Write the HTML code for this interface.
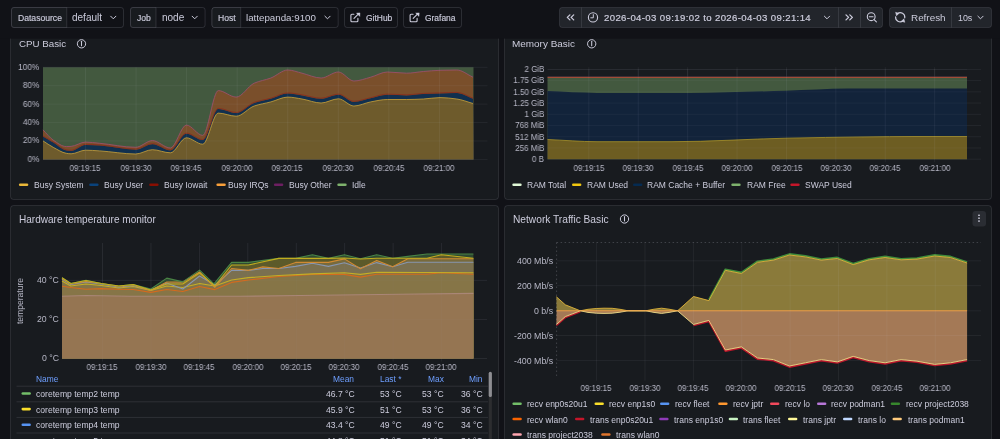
<!DOCTYPE html>
<html><head><meta charset="utf-8"><style>
html,body{margin:0;padding:0;}
body{width:1000px;height:439px;overflow:hidden;background:#111217;position:relative;font-family:"Liberation Sans", sans-serif;}
svg{position:absolute;left:0;top:0;}
.t{position:absolute;white-space:nowrap;will-change:transform;}
</style></head><body>
<svg width="1000" height="439" viewBox="0 0 1000 439">
<rect x="10.5" y="28.5" width="488" height="171" rx="3" fill="#181b1f" stroke="rgba(204,204,220,0.12)" stroke-width="1" />
<rect x="504.5" y="28.5" width="487" height="171" rx="3" fill="#181b1f" stroke="rgba(204,204,220,0.12)" stroke-width="1" />
<rect x="10.5" y="205.5" width="488" height="264" rx="3" fill="#181b1f" stroke="rgba(204,204,220,0.12)" stroke-width="1" />
<rect x="504.5" y="205.5" width="487" height="264" rx="3" fill="#181b1f" stroke="rgba(204,204,220,0.12)" stroke-width="1" />
<rect x="0" y="0" width="1000" height="38.6" rx="0" fill="#111217" stroke="none" stroke-width="1" />
<rect x="11.5" y="7.5" width="112" height="20" rx="2.5" fill="#111217" stroke="rgba(204,204,220,0.15)" stroke-width="1" />
<path d="M14,7.5 H66.75 V27.5 H14 A2.5,2.5 0 0 1 11.5,25 V10 A2.5,2.5 0 0 1 14,7.5 Z" fill="#181b1f" stroke="rgba(204,204,220,0.15)" stroke-width="1"/>
<path d="M110.70,16.20 L113.30,18.80 L115.90,16.20" fill="none" stroke="#ccccdc" stroke-width="1" stroke-linecap="round" stroke-linejoin="round"/>
<rect x="130.5" y="7.5" width="74.6" height="20" rx="2.5" fill="#111217" stroke="rgba(204,204,220,0.15)" stroke-width="1" />
<path d="M133,7.5 H156 V27.5 H133 A2.5,2.5 0 0 1 130.5,25 V10 A2.5,2.5 0 0 1 133,7.5 Z" fill="#181b1f" stroke="rgba(204,204,220,0.15)" stroke-width="1"/>
<path d="M192.10,16.20 L194.70,18.80 L197.30,16.20" fill="none" stroke="#ccccdc" stroke-width="1" stroke-linecap="round" stroke-linejoin="round"/>
<rect x="212.0" y="7.5" width="126.19999999999999" height="20" rx="2.5" fill="#111217" stroke="rgba(204,204,220,0.15)" stroke-width="1" />
<path d="M214.5,7.5 H240.7 V27.5 H214.5 A2.5,2.5 0 0 1 212.0,25 V10 A2.5,2.5 0 0 1 214.5,7.5 Z" fill="#181b1f" stroke="rgba(204,204,220,0.15)" stroke-width="1"/>
<path d="M324.90,16.20 L327.50,18.80 L330.10,16.20" fill="none" stroke="#ccccdc" stroke-width="1" stroke-linecap="round" stroke-linejoin="round"/>
<rect x="344.5" y="7.5" width="53" height="20" rx="2.5" fill="#111217" stroke="rgba(204,204,220,0.15)" stroke-width="1" />
<path d="M353.9,14.3 H351.9 Q350.9,14.3 350.9,15.3 V20.8 Q350.9,21.8 351.9,21.8 H356.9 Q357.9,21.8 357.9,20.8 V18.4" fill="none" stroke="#ccccdc" stroke-width="1.1" stroke-linecap="round"/>
<path d="M354.0,18.3 L358.5,13.8" fill="none" stroke="#ccccdc" stroke-width="1.1" stroke-linecap="round"/>
<path d="M356.5,13.1 L360.0,12.9 L359.79999999999995,16.4 Z" fill="#ccccdc" stroke="#ccccdc" stroke-width="0.4" stroke-linejoin="round"/>
<rect x="403.5" y="7.5" width="58" height="20" rx="2.5" fill="#111217" stroke="rgba(204,204,220,0.15)" stroke-width="1" />
<path d="M413.1,14.3 H411.1 Q410.1,14.3 410.1,15.3 V20.8 Q410.1,21.8 411.1,21.8 H416.1 Q417.1,21.8 417.1,20.8 V18.4" fill="none" stroke="#ccccdc" stroke-width="1.1" stroke-linecap="round"/>
<path d="M413.20000000000005,18.3 L417.70000000000005,13.8" fill="none" stroke="#ccccdc" stroke-width="1.1" stroke-linecap="round"/>
<path d="M415.70000000000005,13.1 L419.20000000000005,12.9 L419.0,16.4 Z" fill="#ccccdc" stroke="#ccccdc" stroke-width="0.4" stroke-linejoin="round"/>
<rect x="559.5" y="7.5" width="323" height="20" rx="2.5" fill="#22252b" stroke="rgba(204,204,220,0.12)" stroke-width="1" />
<line x1="581.5" y1="7.5" x2="581.5" y2="27.5" stroke="rgba(204,204,220,0.12)" stroke-width="1" />
<line x1="838.5" y1="7.5" x2="838.5" y2="27.5" stroke="rgba(204,204,220,0.12)" stroke-width="1" />
<line x1="860.5" y1="7.5" x2="860.5" y2="27.5" stroke="rgba(204,204,220,0.12)" stroke-width="1" />
<path d="M569.9,14.899999999999999 L567.3,17.4 L569.9,19.9 M573.6999999999999,14.899999999999999 L571.0999999999999,17.4 L573.6999999999999,19.9" fill="none" stroke="#ccccdc" stroke-width="1.3" stroke-linecap="round" stroke-linejoin="round"/>
<path d="M846,14.899999999999999 L848.6,17.4 L846,19.9 M849.8,14.899999999999999 L852.4,17.4 L849.8,19.9" fill="none" stroke="#ccccdc" stroke-width="1.3" stroke-linecap="round" stroke-linejoin="round"/>
<circle cx="593" cy="17.4" r="4.6" fill="none" stroke="#ccccdc" stroke-width="1.1"/>
<path d="M593.3,14.6 V17.8 H590.8" fill="none" stroke="#ccccdc" stroke-width="1" stroke-linecap="round"/>
<path d="M824.40,16.20 L827.00,18.80 L829.60,16.20" fill="none" stroke="#ccccdc" stroke-width="1" stroke-linecap="round" stroke-linejoin="round"/>
<circle cx="871.2" cy="16.7" r="3.9" fill="none" stroke="#ccccdc" stroke-width="1.1"/>
<path d="M869.3,16.7 H873.1 M874.1,19.6 L876.4,21.9" fill="none" stroke="#ccccdc" stroke-width="1.1" stroke-linecap="round"/>
<rect x="889.5" y="7.5" width="102" height="20" rx="2.5" fill="#22252b" stroke="rgba(204,204,220,0.12)" stroke-width="1" />
<line x1="951.5" y1="7.5" x2="951.5" y2="27.5" stroke="rgba(204,204,220,0.12)" stroke-width="1" />
<path d="M897.50,13.58 A4.6,4.6 0 0 1 904.77,17.78 M902.90,21.02 A4.6,4.6 0 0 1 895.63,16.82" fill="none" stroke="#ccccdc" stroke-width="1.2" stroke-linecap="round"/>
<path d="M895.6,12.3 L898.9,13.4 L896.5,15.8 Z M904.8,22.3 L901.5,21.2 L903.9,18.8 Z" fill="#ccccdc" stroke="#ccccdc" stroke-width="0.5" stroke-linejoin="round"/>
<path d="M977.90,16.20 L980.50,18.80 L983.10,16.20" fill="none" stroke="#ccccdc" stroke-width="1" stroke-linecap="round" stroke-linejoin="round"/>
<circle cx="81.5" cy="43.8" r="4.15" fill="none" stroke="#ccccdc" stroke-width="1"/>
<path d="M81.5,41.3 V45.8" stroke="#ccccdc" stroke-width="1.05" stroke-linecap="round"/>
<line x1="43" y1="159.4" x2="487.5" y2="159.4" stroke="rgba(204,204,220,0.065)" stroke-width="1" />
<line x1="43" y1="140.98000000000002" x2="487.5" y2="140.98000000000002" stroke="rgba(204,204,220,0.065)" stroke-width="1" />
<line x1="43" y1="122.56" x2="487.5" y2="122.56" stroke="rgba(204,204,220,0.065)" stroke-width="1" />
<line x1="43" y1="104.14" x2="487.5" y2="104.14" stroke="rgba(204,204,220,0.065)" stroke-width="1" />
<line x1="43" y1="85.72" x2="487.5" y2="85.72" stroke="rgba(204,204,220,0.065)" stroke-width="1" />
<line x1="43" y1="67.3" x2="487.5" y2="67.3" stroke="rgba(204,204,220,0.065)" stroke-width="1" />
<rect x="43" y="67.3" width="430.5" height="92.10000000000001" rx="0" fill="#43593f" stroke="none" stroke-width="1" />
<path d="M43.00,129.90 C46.40,133.30 49.80,137.81 53.20,140.10 C57.57,143.04 61.93,146.60 66.30,146.60 C67.90,146.60 69.50,146.50 71.10,146.40 C75.90,146.09 80.70,142.10 85.50,142.10 C90.27,142.10 95.03,142.85 99.80,143.30 C111.77,144.42 123.73,147.30 135.70,147.30 C141.27,147.30 146.83,140.60 152.40,140.60 C158.40,140.60 164.40,148.00 170.40,148.00 C175.73,148.00 181.07,125.10 186.40,125.10 C191.83,125.10 197.27,135.40 202.70,135.40 C207.90,135.40 213.10,90.60 218.30,90.60 C224.27,90.60 230.23,97.10 236.20,97.10 C242.20,97.10 248.20,85.85 254.20,83.20 C259.77,80.74 265.33,80.10 270.90,78.00 C276.50,75.89 282.10,70.00 287.70,70.00 C292.47,70.00 297.23,72.07 302.00,73.20 C308.37,74.70 314.73,78.00 321.10,78.00 C326.87,78.00 332.63,72.00 338.40,72.00 C343.57,72.00 348.73,81.00 353.90,81.00 C359.50,81.00 365.10,78.67 370.70,77.20 C376.27,75.74 381.83,72.00 387.40,72.00 C393.80,72.00 400.20,73.20 406.60,73.20 C412.17,73.20 417.73,71.97 423.30,71.50 C428.87,71.03 434.43,70.46 440.00,70.30 C445.60,70.14 451.20,70.00 456.80,70.00 C462.20,70.00 467.60,74.80 473.00,77.20 L473.50,159.40 C473.50,159.40 43.00,159.40 43.00,159.40 Z" fill="#7a4f2b" />
<path d="M43.00,136.60 C46.40,138.57 49.80,140.49 53.20,142.50 C57.57,145.08 61.93,149.70 66.30,150.40 C67.90,150.66 69.50,150.90 71.10,150.90 C75.90,150.90 80.70,144.90 85.50,144.90 C90.27,144.90 95.03,145.29 99.80,145.60 C111.77,146.38 123.73,149.70 135.70,149.70 C141.27,149.70 146.83,144.20 152.40,144.20 C158.40,144.20 164.40,150.40 170.40,150.40 C175.73,150.40 181.07,133.70 186.40,133.70 C191.83,133.70 197.27,140.10 202.70,140.10 C207.90,140.10 213.10,109.00 218.30,109.00 C224.27,109.00 230.23,113.10 236.20,113.10 C242.20,113.10 248.20,105.07 254.20,103.00 C259.77,101.08 265.33,100.36 270.90,98.80 C276.50,97.23 282.10,93.50 287.70,93.50 C292.47,93.50 297.23,94.68 302.00,95.40 C308.37,96.36 314.73,98.80 321.10,98.80 C326.87,98.80 332.63,94.70 338.40,94.70 C343.57,94.70 348.73,101.90 353.90,101.90 C359.50,101.90 365.10,99.50 370.70,98.30 C376.27,97.10 381.83,94.70 387.40,94.70 C393.80,94.70 400.20,95.40 406.60,95.40 C412.17,95.40 417.73,94.25 423.30,94.00 C428.87,93.75 434.43,93.67 440.00,93.50 C445.60,93.33 451.20,93.00 456.80,93.00 C462.20,93.00 467.60,96.87 473.00,98.80 L473.50,159.40 C473.50,159.40 43.00,159.40 43.00,159.40 Z" fill="#11304f" />
<path d="M43.00,140.90 C46.40,143.03 49.80,145.49 53.20,147.30 C57.57,149.63 61.93,152.62 66.30,153.30 C67.90,153.55 69.50,153.80 71.10,153.80 C75.90,153.80 80.70,150.20 85.50,150.20 C90.27,150.20 95.03,150.61 99.80,150.90 C111.77,151.62 123.73,154.00 135.70,154.00 C141.27,154.00 146.83,149.70 152.40,149.70 C158.40,149.70 164.40,152.80 170.40,152.80 C175.73,152.80 181.07,137.80 186.40,137.80 C191.83,137.80 197.27,144.20 202.70,144.20 C207.90,144.20 213.10,113.10 218.30,113.10 C224.27,113.10 230.23,116.20 236.20,116.20 C242.20,116.20 248.20,108.05 254.20,106.00 C259.77,104.10 265.33,103.37 270.90,101.90 C276.50,100.42 282.10,97.10 287.70,97.10 C292.47,97.10 297.23,98.23 302.00,99.00 C308.37,100.02 314.73,103.00 321.10,103.00 C326.87,103.00 332.63,98.80 338.40,98.80 C343.57,98.80 348.73,106.00 353.90,106.00 C359.50,106.00 365.10,102.91 370.70,101.90 C376.27,100.89 381.83,99.50 387.40,99.50 C393.80,99.50 400.20,99.50 406.60,99.50 C412.17,99.50 417.73,99.25 423.30,99.00 C428.87,98.75 434.43,97.60 440.00,97.60 C445.60,97.60 451.20,98.28 456.80,99.00 C462.20,99.69 467.60,102.00 473.00,103.50 L473.50,159.40 C473.50,159.40 43.00,159.40 43.00,159.40 Z" fill="#6e5b2c" />
<path d="M43.00,129.90 C46.40,133.30 49.80,137.81 53.20,140.10 C57.57,143.04 61.93,146.60 66.30,146.60 C67.90,146.60 69.50,146.50 71.10,146.40 C75.90,146.09 80.70,142.10 85.50,142.10 C90.27,142.10 95.03,142.85 99.80,143.30 C111.77,144.42 123.73,147.30 135.70,147.30 C141.27,147.30 146.83,140.60 152.40,140.60 C158.40,140.60 164.40,148.00 170.40,148.00 C175.73,148.00 181.07,125.10 186.40,125.10 C191.83,125.10 197.27,135.40 202.70,135.40 C207.90,135.40 213.10,90.60 218.30,90.60 C224.27,90.60 230.23,97.10 236.20,97.10 C242.20,97.10 248.20,85.85 254.20,83.20 C259.77,80.74 265.33,80.10 270.90,78.00 C276.50,75.89 282.10,70.00 287.70,70.00 C292.47,70.00 297.23,72.07 302.00,73.20 C308.37,74.70 314.73,78.00 321.10,78.00 C326.87,78.00 332.63,72.00 338.40,72.00 C343.57,72.00 348.73,81.00 353.90,81.00 C359.50,81.00 365.10,78.67 370.70,77.20 C376.27,75.74 381.83,72.00 387.40,72.00 C393.80,72.00 400.20,73.20 406.60,73.20 C412.17,73.20 417.73,71.97 423.30,71.50 C428.87,71.03 434.43,70.46 440.00,70.30 C445.60,70.14 451.20,70.00 456.80,70.00 C462.20,70.00 467.60,74.80 473.00,77.20" fill="none" stroke="#9a4f6a" stroke-width="0.9" stroke-linejoin="round" />
<path d="M43.00,136.00 C46.40,137.97 49.80,139.89 53.20,141.90 C57.57,144.48 61.93,149.10 66.30,149.80 C67.90,150.06 69.50,150.30 71.10,150.30 C75.90,150.30 80.70,144.30 85.50,144.30 C90.27,144.30 95.03,144.69 99.80,145.00 C111.77,145.78 123.73,149.10 135.70,149.10 C141.27,149.10 146.83,143.60 152.40,143.60 C158.40,143.60 164.40,149.80 170.40,149.80 C175.73,149.80 181.07,133.10 186.40,133.10 C191.83,133.10 197.27,139.50 202.70,139.50 C207.90,139.50 213.10,108.40 218.30,108.40 C224.27,108.40 230.23,112.50 236.20,112.50 C242.20,112.50 248.20,104.47 254.20,102.40 C259.77,100.48 265.33,99.76 270.90,98.20 C276.50,96.63 282.10,92.90 287.70,92.90 C292.47,92.90 297.23,94.08 302.00,94.80 C308.37,95.76 314.73,98.20 321.10,98.20 C326.87,98.20 332.63,94.10 338.40,94.10 C343.57,94.10 348.73,101.30 353.90,101.30 C359.50,101.30 365.10,98.90 370.70,97.70 C376.27,96.50 381.83,94.10 387.40,94.10 C393.80,94.10 400.20,94.80 406.60,94.80 C412.17,94.80 417.73,93.65 423.30,93.40 C428.87,93.15 434.43,93.07 440.00,92.90 C445.60,92.73 451.20,92.40 456.80,92.40 C462.20,92.40 467.60,96.27 473.00,98.20" fill="none" stroke="#8b2a1a" stroke-width="0.8" stroke-linejoin="round" />
<path d="M43.00,140.90 C46.40,143.03 49.80,145.49 53.20,147.30 C57.57,149.63 61.93,152.62 66.30,153.30 C67.90,153.55 69.50,153.80 71.10,153.80 C75.90,153.80 80.70,150.20 85.50,150.20 C90.27,150.20 95.03,150.61 99.80,150.90 C111.77,151.62 123.73,154.00 135.70,154.00 C141.27,154.00 146.83,149.70 152.40,149.70 C158.40,149.70 164.40,152.80 170.40,152.80 C175.73,152.80 181.07,137.80 186.40,137.80 C191.83,137.80 197.27,144.20 202.70,144.20 C207.90,144.20 213.10,113.10 218.30,113.10 C224.27,113.10 230.23,116.20 236.20,116.20 C242.20,116.20 248.20,108.05 254.20,106.00 C259.77,104.10 265.33,103.37 270.90,101.90 C276.50,100.42 282.10,97.10 287.70,97.10 C292.47,97.10 297.23,98.23 302.00,99.00 C308.37,100.02 314.73,103.00 321.10,103.00 C326.87,103.00 332.63,98.80 338.40,98.80 C343.57,98.80 348.73,106.00 353.90,106.00 C359.50,106.00 365.10,102.91 370.70,101.90 C376.27,100.89 381.83,99.50 387.40,99.50 C393.80,99.50 400.20,99.50 406.60,99.50 C412.17,99.50 417.73,99.25 423.30,99.00 C428.87,98.75 434.43,97.60 440.00,97.60 C445.60,97.60 451.20,98.28 456.80,99.00 C462.20,99.69 467.60,102.00 473.00,103.50" fill="none" stroke="#caa23a" stroke-width="0.8" stroke-linejoin="round" />
<line x1="43" y1="159.4" x2="473.5" y2="159.4" stroke="rgba(204,204,220,0.06)" stroke-width="1" />
<line x1="43" y1="140.98000000000002" x2="473.5" y2="140.98000000000002" stroke="rgba(204,204,220,0.06)" stroke-width="1" />
<line x1="43" y1="122.56" x2="473.5" y2="122.56" stroke="rgba(204,204,220,0.06)" stroke-width="1" />
<line x1="43" y1="104.14" x2="473.5" y2="104.14" stroke="rgba(204,204,220,0.06)" stroke-width="1" />
<line x1="43" y1="85.72" x2="473.5" y2="85.72" stroke="rgba(204,204,220,0.06)" stroke-width="1" />
<line x1="43" y1="67.3" x2="473.5" y2="67.3" stroke="rgba(204,204,220,0.06)" stroke-width="1" />
<line x1="85.5" y1="67.3" x2="85.5" y2="159.4" stroke="rgba(204,204,220,0.08)" stroke-width="1" />
<line x1="85.5" y1="159.4" x2="85.5" y2="162.4" stroke="rgba(204,204,220,0.065)" stroke-width="1" />
<line x1="136.06" y1="67.3" x2="136.06" y2="159.4" stroke="rgba(204,204,220,0.08)" stroke-width="1" />
<line x1="136.06" y1="159.4" x2="136.06" y2="162.4" stroke="rgba(204,204,220,0.065)" stroke-width="1" />
<line x1="186.62" y1="67.3" x2="186.62" y2="159.4" stroke="rgba(204,204,220,0.08)" stroke-width="1" />
<line x1="186.62" y1="159.4" x2="186.62" y2="162.4" stroke="rgba(204,204,220,0.065)" stroke-width="1" />
<line x1="237.18" y1="67.3" x2="237.18" y2="159.4" stroke="rgba(204,204,220,0.08)" stroke-width="1" />
<line x1="237.18" y1="159.4" x2="237.18" y2="162.4" stroke="rgba(204,204,220,0.065)" stroke-width="1" />
<line x1="287.74" y1="67.3" x2="287.74" y2="159.4" stroke="rgba(204,204,220,0.08)" stroke-width="1" />
<line x1="287.74" y1="159.4" x2="287.74" y2="162.4" stroke="rgba(204,204,220,0.065)" stroke-width="1" />
<line x1="338.3" y1="67.3" x2="338.3" y2="159.4" stroke="rgba(204,204,220,0.08)" stroke-width="1" />
<line x1="338.3" y1="159.4" x2="338.3" y2="162.4" stroke="rgba(204,204,220,0.065)" stroke-width="1" />
<line x1="388.86" y1="67.3" x2="388.86" y2="159.4" stroke="rgba(204,204,220,0.08)" stroke-width="1" />
<line x1="388.86" y1="159.4" x2="388.86" y2="162.4" stroke="rgba(204,204,220,0.065)" stroke-width="1" />
<line x1="439.42" y1="67.3" x2="439.42" y2="159.4" stroke="rgba(204,204,220,0.08)" stroke-width="1" />
<line x1="439.42" y1="159.4" x2="439.42" y2="162.4" stroke="rgba(204,204,220,0.065)" stroke-width="1" />
<rect x="18.9" y="183.39999999999998" width="9.4" height="2.6" rx="1.3" fill="#eab839" stroke="none" stroke-width="1" />
<rect x="89.2" y="183.39999999999998" width="9.4" height="2.6" rx="1.3" fill="#0a437c" stroke="none" stroke-width="1" />
<rect x="149.2" y="183.39999999999998" width="9.4" height="2.6" rx="1.3" fill="#890f02" stroke="none" stroke-width="1" />
<rect x="216.4" y="183.39999999999998" width="9.4" height="2.6" rx="1.3" fill="#f9a03a" stroke="none" stroke-width="1" />
<rect x="273.9" y="183.39999999999998" width="9.4" height="2.6" rx="1.3" fill="#6d1f62" stroke="none" stroke-width="1" />
<rect x="337.3" y="183.39999999999998" width="9.4" height="2.6" rx="1.3" fill="#7eb26d" stroke="none" stroke-width="1" />
<circle cx="591.7" cy="43.8" r="4.15" fill="none" stroke="#ccccdc" stroke-width="1"/>
<path d="M591.7,41.3 V45.8" stroke="#ccccdc" stroke-width="1.05" stroke-linecap="round"/>
<line x1="547.5" y1="69.4" x2="981" y2="69.4" stroke="rgba(204,204,220,0.065)" stroke-width="1" />
<line x1="547.5" y1="80.625" x2="981" y2="80.625" stroke="rgba(204,204,220,0.065)" stroke-width="1" />
<line x1="547.5" y1="91.85000000000001" x2="981" y2="91.85000000000001" stroke="rgba(204,204,220,0.065)" stroke-width="1" />
<line x1="547.5" y1="103.075" x2="981" y2="103.075" stroke="rgba(204,204,220,0.065)" stroke-width="1" />
<line x1="547.5" y1="114.30000000000001" x2="981" y2="114.30000000000001" stroke="rgba(204,204,220,0.065)" stroke-width="1" />
<line x1="547.5" y1="125.525" x2="981" y2="125.525" stroke="rgba(204,204,220,0.065)" stroke-width="1" />
<line x1="547.5" y1="136.75" x2="981" y2="136.75" stroke="rgba(204,204,220,0.065)" stroke-width="1" />
<line x1="547.5" y1="147.97500000000002" x2="981" y2="147.97500000000002" stroke="rgba(204,204,220,0.065)" stroke-width="1" />
<line x1="547.5" y1="159.2" x2="981" y2="159.2" stroke="rgba(204,204,220,0.065)" stroke-width="1" />
<line x1="588.85" y1="67.2" x2="588.85" y2="159.2" stroke="rgba(204,204,220,0.065)" stroke-width="1" />
<line x1="638.25" y1="67.2" x2="638.25" y2="159.2" stroke="rgba(204,204,220,0.065)" stroke-width="1" />
<line x1="687.65" y1="67.2" x2="687.65" y2="159.2" stroke="rgba(204,204,220,0.065)" stroke-width="1" />
<line x1="737.05" y1="67.2" x2="737.05" y2="159.2" stroke="rgba(204,204,220,0.065)" stroke-width="1" />
<line x1="786.45" y1="67.2" x2="786.45" y2="159.2" stroke="rgba(204,204,220,0.065)" stroke-width="1" />
<line x1="835.85" y1="67.2" x2="835.85" y2="159.2" stroke="rgba(204,204,220,0.065)" stroke-width="1" />
<line x1="885.25" y1="67.2" x2="885.25" y2="159.2" stroke="rgba(204,204,220,0.065)" stroke-width="1" />
<line x1="934.6500000000001" y1="67.2" x2="934.6500000000001" y2="159.2" stroke="rgba(204,204,220,0.065)" stroke-width="1" />
<rect x="547.5" y="77.5" width="419.5" height="81.69999999999999" rx="0" fill="#43593f" stroke="none" stroke-width="1" />
<path d="M547.50,91.10 C564.00,91.70 580.50,92.90 597.00,92.90 C628.00,92.90 659.00,92.90 690.00,92.90 C722.00,92.90 754.00,91.61 786.00,90.70 C806.67,90.12 827.33,88.50 848.00,88.50 C887.67,88.50 927.33,88.50 967.00,88.50 L967.00,159.20 C967.00,159.20 547.50,159.20 547.50,159.20 Z" fill="#12233a" />
<path d="M547.50,139.50 C564.00,140.23 580.50,141.70 597.00,141.70 C622.00,141.70 647.00,141.70 672.00,141.70 C710.00,141.70 748.00,139.00 786.00,138.20 C812.33,137.65 838.67,137.18 865.00,136.90 C881.33,136.73 897.67,136.50 914.00,136.50 C931.67,136.50 949.33,136.50 967.00,136.50 L967.00,159.20 C967.00,159.20 547.50,159.20 547.50,159.20 Z" fill="#6d5d22" />
<path d="M547.50,139.50 C564.00,140.23 580.50,141.70 597.00,141.70 C622.00,141.70 647.00,141.70 672.00,141.70 C710.00,141.70 748.00,139.00 786.00,138.20 C812.33,137.65 838.67,137.18 865.00,136.90 C881.33,136.73 897.67,136.50 914.00,136.50 C931.67,136.50 949.33,136.50 967.00,136.50" fill="none" stroke="#a89228" stroke-width="0.8" stroke-linejoin="round" />
<line x1="547.5" y1="76.4" x2="967" y2="76.4" stroke="#13253a" stroke-width="0.8" />
<line x1="547.5" y1="77.3" x2="967" y2="77.3" stroke="#c8553a" stroke-width="1.1" />
<line x1="547.5" y1="69.4" x2="967" y2="69.4" stroke="rgba(204,204,220,0.05)" stroke-width="1" />
<line x1="547.5" y1="80.625" x2="967" y2="80.625" stroke="rgba(204,204,220,0.05)" stroke-width="1" />
<line x1="547.5" y1="91.85000000000001" x2="967" y2="91.85000000000001" stroke="rgba(204,204,220,0.05)" stroke-width="1" />
<line x1="547.5" y1="103.075" x2="967" y2="103.075" stroke="rgba(204,204,220,0.05)" stroke-width="1" />
<line x1="547.5" y1="114.30000000000001" x2="967" y2="114.30000000000001" stroke="rgba(204,204,220,0.05)" stroke-width="1" />
<line x1="547.5" y1="125.525" x2="967" y2="125.525" stroke="rgba(204,204,220,0.05)" stroke-width="1" />
<line x1="547.5" y1="136.75" x2="967" y2="136.75" stroke="rgba(204,204,220,0.05)" stroke-width="1" />
<line x1="547.5" y1="147.97500000000002" x2="967" y2="147.97500000000002" stroke="rgba(204,204,220,0.05)" stroke-width="1" />
<line x1="547.5" y1="159.2" x2="967" y2="159.2" stroke="rgba(204,204,220,0.05)" stroke-width="1" />
<line x1="588.85" y1="69.4" x2="588.85" y2="159.2" stroke="rgba(204,204,220,0.07)" stroke-width="1" />
<line x1="588.85" y1="159.2" x2="588.85" y2="162.2" stroke="rgba(204,204,220,0.065)" stroke-width="1" />
<line x1="638.25" y1="69.4" x2="638.25" y2="159.2" stroke="rgba(204,204,220,0.07)" stroke-width="1" />
<line x1="638.25" y1="159.2" x2="638.25" y2="162.2" stroke="rgba(204,204,220,0.065)" stroke-width="1" />
<line x1="687.65" y1="69.4" x2="687.65" y2="159.2" stroke="rgba(204,204,220,0.07)" stroke-width="1" />
<line x1="687.65" y1="159.2" x2="687.65" y2="162.2" stroke="rgba(204,204,220,0.065)" stroke-width="1" />
<line x1="737.05" y1="69.4" x2="737.05" y2="159.2" stroke="rgba(204,204,220,0.07)" stroke-width="1" />
<line x1="737.05" y1="159.2" x2="737.05" y2="162.2" stroke="rgba(204,204,220,0.065)" stroke-width="1" />
<line x1="786.45" y1="69.4" x2="786.45" y2="159.2" stroke="rgba(204,204,220,0.07)" stroke-width="1" />
<line x1="786.45" y1="159.2" x2="786.45" y2="162.2" stroke="rgba(204,204,220,0.065)" stroke-width="1" />
<line x1="835.85" y1="69.4" x2="835.85" y2="159.2" stroke="rgba(204,204,220,0.07)" stroke-width="1" />
<line x1="835.85" y1="159.2" x2="835.85" y2="162.2" stroke="rgba(204,204,220,0.065)" stroke-width="1" />
<line x1="885.25" y1="69.4" x2="885.25" y2="159.2" stroke="rgba(204,204,220,0.07)" stroke-width="1" />
<line x1="885.25" y1="159.2" x2="885.25" y2="162.2" stroke="rgba(204,204,220,0.065)" stroke-width="1" />
<line x1="934.6500000000001" y1="69.4" x2="934.6500000000001" y2="159.2" stroke="rgba(204,204,220,0.07)" stroke-width="1" />
<line x1="934.6500000000001" y1="159.2" x2="934.6500000000001" y2="162.2" stroke="rgba(204,204,220,0.065)" stroke-width="1" />
<rect x="512.3" y="183.5" width="9.4" height="2.6" rx="1.3" fill="#e0f9d7" stroke="none" stroke-width="1" />
<rect x="572" y="183.5" width="9.4" height="2.6" rx="1.3" fill="#f2c80f" stroke="none" stroke-width="1" />
<rect x="633" y="183.5" width="9.4" height="2.6" rx="1.3" fill="#052b51" stroke="none" stroke-width="1" />
<rect x="731.3" y="183.5" width="9.4" height="2.6" rx="1.3" fill="#7eb26d" stroke="none" stroke-width="1" />
<rect x="790.3" y="183.5" width="9.4" height="2.6" rx="1.3" fill="#c4162a" stroke="none" stroke-width="1" />
<line x1="62" y1="358.5" x2="487" y2="358.5" stroke="rgba(204,204,220,0.065)" stroke-width="1" />
<line x1="62" y1="319.4" x2="487" y2="319.4" stroke="rgba(204,204,220,0.065)" stroke-width="1" />
<line x1="62" y1="280.3" x2="487" y2="280.3" stroke="rgba(204,204,220,0.065)" stroke-width="1" />
<line x1="102.5" y1="243" x2="102.5" y2="358.5" stroke="rgba(204,204,220,0.065)" stroke-width="1" />
<line x1="150.94" y1="243" x2="150.94" y2="358.5" stroke="rgba(204,204,220,0.065)" stroke-width="1" />
<line x1="199.38" y1="243" x2="199.38" y2="358.5" stroke="rgba(204,204,220,0.065)" stroke-width="1" />
<line x1="247.82" y1="243" x2="247.82" y2="358.5" stroke="rgba(204,204,220,0.065)" stroke-width="1" />
<line x1="296.26" y1="243" x2="296.26" y2="358.5" stroke="rgba(204,204,220,0.065)" stroke-width="1" />
<line x1="344.7" y1="243" x2="344.7" y2="358.5" stroke="rgba(204,204,220,0.065)" stroke-width="1" />
<line x1="393.14" y1="243" x2="393.14" y2="358.5" stroke="rgba(204,204,220,0.065)" stroke-width="1" />
<line x1="441.58" y1="243" x2="441.58" y2="358.5" stroke="rgba(204,204,220,0.065)" stroke-width="1" />
<path d="M62.00,277.60 L70.80,283.50 L86.00,280.30 L101.20,283.50 L118.80,286.00 L133.20,284.50 L150.80,289.00 L166.80,278.10 L182.80,281.90 L199.60,270.10 L214.00,283.80 L231.60,262.40 L248.40,262.40 L278.80,258.40 L295.60,258.40 L312.40,254.70 L328.40,258.40 L344.40,254.70 L360.40,258.80 L376.70,254.70 L392.70,258.30 L407.80,256.40 L427.00,254.00 L473.40,254.00 L473.40,358.50 L62.00,358.50 Z" fill="#2f4a31" />
<path d="M62.00,277.80 L70.80,283.50 L86.00,280.50 L101.20,283.50 L118.80,286.00 L133.20,284.50 L150.80,290.00 L166.80,284.00 L182.80,284.00 L199.60,273.00 L214.80,286.00 L231.60,265.00 L248.40,265.00 L278.80,258.40 L295.60,258.40 L328.40,258.40 L344.40,258.00 L360.40,259.00 L376.70,258.30 L407.80,258.30 L427.00,258.30 L441.30,254.70 L473.40,258.30 L473.40,358.50 L62.00,358.50 Z" fill="#5c5a2a" />
<path d="M62.00,278.50 L70.80,284.00 L86.00,281.50 L101.20,283.50 L118.80,286.50 L133.20,285.00 L150.80,290.50 L166.80,282.00 L182.80,282.00 L199.60,272.00 L214.80,287.40 L231.60,268.50 L248.40,270.40 L262.80,266.90 L278.80,268.50 L295.60,262.40 L328.40,262.40 L344.40,258.90 L360.40,268.70 L376.70,260.40 L392.70,266.80 L407.80,258.80 L473.40,258.80 L473.40,358.50 L62.00,358.50 Z" fill="#786a3c" />
<path d="M62.00,279.00 L70.80,284.50 L86.00,282.00 L101.20,284.00 L118.80,287.00 L133.20,285.50 L150.80,290.00 L166.80,283.00 L182.80,289.00 L199.60,276.00 L214.80,285.00 L231.60,270.40 L248.40,270.40 L262.80,268.50 L278.80,268.50 L295.60,266.40 L312.40,263.20 L328.40,266.40 L344.40,262.70 L360.40,268.00 L376.70,262.60 L392.70,266.80 L407.80,262.30 L473.40,262.30 L473.40,358.50 L62.00,358.50 Z" fill="#7a7050" />
<path d="M62.00,281.00 L70.80,286.00 L86.00,284.00 L101.20,285.50 L118.80,288.00 L133.20,286.50 L150.80,290.50 L166.80,286.00 L182.80,287.50 L199.60,283.50 L214.80,286.00 L231.60,280.00 L248.40,277.60 L278.80,275.50 L312.40,273.90 L344.40,272.80 L360.40,274.40 L376.70,272.20 L473.40,272.70 L473.40,358.50 L62.00,358.50 Z" fill="#847446" />
<path d="M62.00,286.20 L70.80,287.50 L86.00,289.20 L101.20,288.60 L118.80,289.20 L133.20,289.50 L150.80,292.40 L166.80,289.50 L182.80,291.50 L199.60,286.50 L214.80,289.60 L231.60,282.40 L248.40,280.00 L278.80,276.50 L312.40,274.40 L344.40,274.40 L360.40,277.10 L376.70,274.30 L427.00,274.30 L441.30,272.70 L473.40,274.30 L473.40,358.50 L62.00,358.50 Z" fill="#867547" />
<path d="M62.00,296.30 L86.00,295.50 L130.00,296.30 L240.00,296.30 L300.00,295.50 L400.00,294.20 L473.40,293.40 L473.40,358.50 L62.00,358.50 Z" fill="#957552" />
<path d="M62.00,296.30 L86.00,295.50 L130.00,296.30 L240.00,296.30 L300.00,295.50 L400.00,294.20 L473.40,293.40" fill="none" stroke="#a98676" stroke-width="1.1" stroke-linejoin="round" />
<path d="M62.00,286.20 L70.80,287.50 L86.00,289.20 L101.20,288.60 L118.80,289.20 L133.20,289.50 L150.80,292.40 L166.80,289.50 L182.80,291.50 L199.60,286.50 L214.80,289.60 L231.60,282.40 L248.40,280.00 L278.80,276.50 L312.40,274.40 L344.40,274.40 L360.40,277.10 L376.70,274.30 L427.00,274.30 L441.30,272.70 L473.40,274.30" fill="none" stroke="#d46a1e" stroke-width="1.1" stroke-linejoin="round" />
<path d="M62.00,281.00 L70.80,286.00 L86.00,284.00 L101.20,285.50 L118.80,288.00 L133.20,286.50 L150.80,290.50 L166.80,286.00 L182.80,287.50 L199.60,283.50 L214.80,286.00 L231.60,280.00 L248.40,277.60 L278.80,275.50 L312.40,273.90 L344.40,272.80 L360.40,274.40 L376.70,272.20 L473.40,272.70" fill="none" stroke="#c4ae26" stroke-width="1.1" stroke-linejoin="round" />
<path d="M62.00,279.00 L70.80,284.50 L86.00,282.00 L101.20,284.00 L118.80,287.00 L133.20,285.50 L150.80,290.00 L166.80,283.00 L182.80,289.00 L199.60,276.00 L214.80,285.00 L231.60,270.40 L248.40,270.40 L262.80,268.50 L278.80,268.50 L295.60,266.40 L312.40,263.20 L328.40,266.40 L344.40,262.70 L360.40,268.00 L376.70,262.60 L392.70,266.80 L407.80,262.30 L473.40,262.30" fill="none" stroke="#8796b0" stroke-width="1.1" stroke-linejoin="round" />
<path d="M62.00,278.50 L70.80,284.00 L86.00,281.50 L101.20,283.50 L118.80,286.50 L133.20,285.00 L150.80,290.50 L166.80,282.00 L182.80,282.00 L199.60,272.00 L214.80,287.40 L231.60,268.50 L248.40,270.40 L262.80,266.90 L278.80,268.50 L295.60,262.40 L328.40,262.40 L344.40,258.90 L360.40,268.70 L376.70,260.40 L392.70,266.80 L407.80,258.80 L473.40,258.80" fill="none" stroke="#d08a32" stroke-width="1.1" stroke-linejoin="round" />
<path d="M62.00,277.60 L70.80,283.50 L86.00,280.30 L101.20,283.50 L118.80,286.00 L133.20,284.50 L150.80,289.00 L166.80,278.10 L182.80,281.90 L199.60,270.10 L214.00,283.80 L231.60,262.40 L248.40,262.40 L278.80,258.40 L295.60,258.40 L312.40,254.70 L328.40,258.40 L344.40,254.70 L360.40,258.80 L376.70,254.70 L392.70,258.30 L407.80,256.40 L427.00,254.00 L473.40,254.00" fill="none" stroke="#4a8445" stroke-width="1.1" stroke-linejoin="round" />
<path d="M62.00,277.80 L70.80,283.50 L86.00,280.50 L101.20,283.50 L118.80,286.00 L133.20,284.50 L150.80,290.00 L166.80,284.00 L182.80,284.00 L199.60,273.00 L214.80,286.00 L231.60,265.00 L248.40,265.00 L278.80,258.40 L295.60,258.40 L328.40,258.40 L344.40,258.00 L360.40,259.00 L376.70,258.30 L407.80,258.30 L427.00,258.30 L441.30,254.70 L473.40,258.30" fill="none" stroke="#c2ac1e" stroke-width="1.1" stroke-linejoin="round" />
<line x1="62" y1="358.5" x2="487" y2="358.5" stroke="rgba(204,204,220,0.03)" stroke-width="1" />
<line x1="62" y1="319.4" x2="487" y2="319.4" stroke="rgba(204,204,220,0.03)" stroke-width="1" />
<line x1="62" y1="280.3" x2="487" y2="280.3" stroke="rgba(204,204,220,0.03)" stroke-width="1" />
<line x1="102.5" y1="243" x2="102.5" y2="358.5" stroke="rgba(204,204,220,0.03)" stroke-width="1" />
<line x1="102.5" y1="358.5" x2="102.5" y2="361.5" stroke="rgba(204,204,220,0.065)" stroke-width="1" />
<line x1="150.94" y1="243" x2="150.94" y2="358.5" stroke="rgba(204,204,220,0.03)" stroke-width="1" />
<line x1="150.94" y1="358.5" x2="150.94" y2="361.5" stroke="rgba(204,204,220,0.065)" stroke-width="1" />
<line x1="199.38" y1="243" x2="199.38" y2="358.5" stroke="rgba(204,204,220,0.03)" stroke-width="1" />
<line x1="199.38" y1="358.5" x2="199.38" y2="361.5" stroke="rgba(204,204,220,0.065)" stroke-width="1" />
<line x1="247.82" y1="243" x2="247.82" y2="358.5" stroke="rgba(204,204,220,0.03)" stroke-width="1" />
<line x1="247.82" y1="358.5" x2="247.82" y2="361.5" stroke="rgba(204,204,220,0.065)" stroke-width="1" />
<line x1="296.26" y1="243" x2="296.26" y2="358.5" stroke="rgba(204,204,220,0.03)" stroke-width="1" />
<line x1="296.26" y1="358.5" x2="296.26" y2="361.5" stroke="rgba(204,204,220,0.065)" stroke-width="1" />
<line x1="344.7" y1="243" x2="344.7" y2="358.5" stroke="rgba(204,204,220,0.03)" stroke-width="1" />
<line x1="344.7" y1="358.5" x2="344.7" y2="361.5" stroke="rgba(204,204,220,0.065)" stroke-width="1" />
<line x1="393.14" y1="243" x2="393.14" y2="358.5" stroke="rgba(204,204,220,0.03)" stroke-width="1" />
<line x1="393.14" y1="358.5" x2="393.14" y2="361.5" stroke="rgba(204,204,220,0.065)" stroke-width="1" />
<line x1="441.58" y1="243" x2="441.58" y2="358.5" stroke="rgba(204,204,220,0.03)" stroke-width="1" />
<line x1="441.58" y1="358.5" x2="441.58" y2="361.5" stroke="rgba(204,204,220,0.065)" stroke-width="1" />
<line x1="16.5" y1="386.2" x2="488" y2="386.2" stroke="rgba(204,204,220,0.12)" stroke-width="1" />
<rect x="21.5" y="392.2" width="9.4" height="2.6" rx="1.3" fill="#73bf69" stroke="none" stroke-width="1" />
<line x1="16.5" y1="401.8" x2="488" y2="401.8" stroke="rgba(204,204,220,0.12)" stroke-width="1" />
<rect x="21.5" y="407.8" width="9.4" height="2.6" rx="1.3" fill="#fade2a" stroke="none" stroke-width="1" />
<line x1="16.5" y1="417.4" x2="488" y2="417.4" stroke="rgba(204,204,220,0.12)" stroke-width="1" />
<rect x="21.5" y="423.4" width="9.4" height="2.6" rx="1.3" fill="#5794f2" stroke="none" stroke-width="1" />
<line x1="16.5" y1="433.0" x2="488" y2="433.0" stroke="rgba(204,204,220,0.12)" stroke-width="1" />
<rect x="21.5" y="439.0" width="9.4" height="2.6" rx="1.3" fill="#ff9830" stroke="none" stroke-width="1" />
<rect x="488.7" y="372" width="3.2" height="80" rx="1.6" fill="#2c2d2f" stroke="none" stroke-width="1" />
<rect x="488.7" y="371.8" width="3.2" height="25.2" rx="1.6" fill="#8e8e92" stroke="none" stroke-width="1" />
<circle cx="624.5" cy="219" r="4.15" fill="none" stroke="#ccccdc" stroke-width="1"/>
<path d="M624.5,216.5 V221.0" stroke="#ccccdc" stroke-width="1.05" stroke-linecap="round"/>
<rect x="972.5" y="211" width="13.5" height="15.5" rx="3" fill="#2a2d33" stroke="none" stroke-width="1" />
<rect x="978.2" y="214.60000000000002" width="1.6" height="1.4" rx="0" fill="#ccccdc" stroke="none" stroke-width="1" />
<rect x="978.2" y="217.5" width="1.6" height="1.4" rx="0" fill="#ccccdc" stroke="none" stroke-width="1" />
<rect x="978.2" y="220.4" width="1.6" height="1.4" rx="0" fill="#ccccdc" stroke="none" stroke-width="1" />
<path d="M556.40,296.80 L565.30,304.80 L580.30,310.80 L588.00,309.30 L596.30,308.50 L604.00,308.20 L612.20,308.30 L620.00,309.30 L628.10,310.80 L645.70,310.80 L654.00,309.20 L661.60,308.20 L669.00,309.20 L677.60,310.80 L693.50,296.50 L708.90,300.60 L725.40,270.30 L741.40,273.50 L757.50,262.30 L773.50,260.10 L789.40,255.00 L805.40,256.90 L821.30,260.10 L837.30,258.50 L853.20,264.60 L869.20,259.80 L885.10,257.50 L901.10,259.80 L917.00,259.10 L934.60,256.00 L950.50,257.50 L967.10,263.00 L967.10,310.80 L556.60,310.80 Z" fill="#8a7a3a" />
<path d="M556.40,324.50 L565.30,316.60 L580.30,310.80 L588.00,312.40 L596.30,313.20 L604.00,313.40 L612.20,313.20 L620.00,312.20 L628.10,310.80 L645.70,310.80 L654.00,312.40 L661.60,313.40 L669.00,312.40 L677.60,310.80 L693.50,324.50 L708.90,320.40 L725.40,350.00 L741.40,346.90 L757.50,358.00 L773.50,359.60 L789.40,366.00 L805.40,362.80 L821.30,359.60 L837.30,361.90 L853.20,356.40 L869.20,360.60 L885.10,362.80 L901.10,359.60 L917.00,361.20 L934.60,364.40 L950.50,362.80 L967.10,359.60 L967.10,310.80 L556.60,310.80 Z" fill="#a47956" />
<path d="M708.90,299.60 L725.40,269.30 L741.40,272.50 L757.50,261.30 L773.50,259.10 L789.40,254.00 L805.40,255.90 L821.30,259.10 L837.30,257.50 L853.20,263.60 L869.20,258.80 L885.10,256.50 L901.10,258.80 L917.00,258.10 L934.60,255.00 L950.50,256.50 L967.10,262.00" fill="none" stroke="#3f8a3a" stroke-width="1.8" stroke-linejoin="round" />
<path d="M556.40,296.80 L565.30,304.80 L580.30,310.80 L588.00,309.30 L596.30,308.50 L604.00,308.20 L612.20,308.30 L620.00,309.30 L628.10,310.80 L645.70,310.80 L654.00,309.20 L661.60,308.20 L669.00,309.20 L677.60,310.80 L693.50,296.50 L708.90,300.60 L725.40,270.30 L741.40,273.50 L757.50,262.30 L773.50,260.10 L789.40,255.00 L805.40,256.90 L821.30,260.10 L837.30,258.50 L853.20,264.60 L869.20,259.80 L885.10,257.50 L901.10,259.80 L917.00,259.10 L934.60,256.00 L950.50,257.50 L967.10,263.00" fill="none" stroke="#e0b43a" stroke-width="0.9" stroke-linejoin="round" />
<path d="M693.50,325.50 L708.90,321.40 L725.40,351.00 L741.40,347.90 L757.50,359.00 L773.50,360.60 L789.40,367.00 L805.40,363.80 L821.30,360.60 L837.30,362.90 L853.20,357.40 L869.20,361.60 L885.10,363.80 L901.10,360.60 L917.00,362.20 L934.60,365.40 L950.50,363.80 L967.10,360.60" fill="none" stroke="#b8162a" stroke-width="1.8" stroke-linejoin="round" />
<path d="M556.40,325.50 L565.30,317.60 L580.30,311.80" fill="none" stroke="#b8162a" stroke-width="1.6" stroke-linejoin="round" />
<path d="M556.40,324.50 L565.30,316.60 L580.30,310.80 L588.00,312.40 L596.30,313.20 L604.00,313.40 L612.20,313.20 L620.00,312.20 L628.10,310.80 L645.70,310.80 L654.00,312.40 L661.60,313.40 L669.00,312.40 L677.60,310.80 L693.50,324.50 L708.90,320.40 L725.40,350.00 L741.40,346.90 L757.50,358.00 L773.50,359.60 L789.40,366.00 L805.40,362.80 L821.30,359.60 L837.30,361.90 L853.20,356.40 L869.20,360.60 L885.10,362.80 L901.10,359.60 L917.00,361.20 L934.60,364.40 L950.50,362.80 L967.10,359.60" fill="none" stroke="#f2e08a" stroke-width="0.9" stroke-linejoin="round" />
<line x1="556.6" y1="310.8" x2="967.1" y2="310.8" stroke="#f0a040" stroke-width="1.1" />
<line x1="556.6" y1="260.8" x2="981" y2="260.8" stroke="rgba(204,204,220,0.065)" stroke-width="1" />
<line x1="556.6" y1="285.7" x2="981" y2="285.7" stroke="rgba(204,204,220,0.065)" stroke-width="1" />
<line x1="556.6" y1="310.8" x2="981" y2="310.8" stroke="rgba(204,204,220,0.065)" stroke-width="1" />
<line x1="556.6" y1="335.5" x2="981" y2="335.5" stroke="rgba(204,204,220,0.065)" stroke-width="1" />
<line x1="556.6" y1="360.4" x2="981" y2="360.4" stroke="rgba(204,204,220,0.065)" stroke-width="1" />
<line x1="596.6" y1="242.5" x2="596.6" y2="380.7" stroke="rgba(204,204,220,0.065)" stroke-width="1" />
<line x1="644.98" y1="242.5" x2="644.98" y2="380.7" stroke="rgba(204,204,220,0.065)" stroke-width="1" />
<line x1="693.36" y1="242.5" x2="693.36" y2="380.7" stroke="rgba(204,204,220,0.065)" stroke-width="1" />
<line x1="741.74" y1="242.5" x2="741.74" y2="380.7" stroke="rgba(204,204,220,0.065)" stroke-width="1" />
<line x1="790.12" y1="242.5" x2="790.12" y2="380.7" stroke="rgba(204,204,220,0.065)" stroke-width="1" />
<line x1="838.5" y1="242.5" x2="838.5" y2="380.7" stroke="rgba(204,204,220,0.065)" stroke-width="1" />
<line x1="886.8800000000001" y1="242.5" x2="886.8800000000001" y2="380.7" stroke="rgba(204,204,220,0.065)" stroke-width="1" />
<line x1="935.26" y1="242.5" x2="935.26" y2="380.7" stroke="rgba(204,204,220,0.065)" stroke-width="1" />
<line x1="556.6" y1="242.5" x2="981" y2="242.5" stroke="rgba(204,204,220,0.22)" stroke-width="1" stroke-dasharray="1.5,2.5"/>
<line x1="556.6" y1="242.5" x2="556.6" y2="378" stroke="rgba(204,204,220,0.22)" stroke-width="1" stroke-dasharray="1.5,2.5"/>
<rect x="512.4" y="402.4" width="9.4" height="2.6" rx="1.3" fill="#73bf69" stroke="none" stroke-width="1" />
<rect x="594.5" y="402.4" width="9.4" height="2.6" rx="1.3" fill="#fade2a" stroke="none" stroke-width="1" />
<rect x="660" y="402.4" width="9.4" height="2.6" rx="1.3" fill="#5794f2" stroke="none" stroke-width="1" />
<rect x="718.2" y="402.4" width="9.4" height="2.6" rx="1.3" fill="#ff9830" stroke="none" stroke-width="1" />
<rect x="770" y="402.4" width="9.4" height="2.6" rx="1.3" fill="#f2495c" stroke="none" stroke-width="1" />
<rect x="817" y="402.4" width="9.4" height="2.6" rx="1.3" fill="#b877d9" stroke="none" stroke-width="1" />
<rect x="890.7" y="402.4" width="9.4" height="2.6" rx="1.3" fill="#37872d" stroke="none" stroke-width="1" />
<rect x="512.4" y="417.7" width="9.4" height="2.6" rx="1.3" fill="#fa6400" stroke="none" stroke-width="1" />
<rect x="575" y="417.7" width="9.4" height="2.6" rx="1.3" fill="#c4162a" stroke="none" stroke-width="1" />
<rect x="659.2" y="417.7" width="9.4" height="2.6" rx="1.3" fill="#8f3bb8" stroke="none" stroke-width="1" />
<rect x="728.7" y="417.7" width="9.4" height="2.6" rx="1.3" fill="#c8f2c2" stroke="none" stroke-width="1" />
<rect x="788" y="417.7" width="9.4" height="2.6" rx="1.3" fill="#fff899" stroke="none" stroke-width="1" />
<rect x="843" y="417.7" width="9.4" height="2.6" rx="1.3" fill="#c0d8ff" stroke="none" stroke-width="1" />
<rect x="892.5" y="417.7" width="9.4" height="2.6" rx="1.3" fill="#ffcb7d" stroke="none" stroke-width="1" />
<rect x="512.4" y="433.2" width="9.4" height="2.6" rx="1.3" fill="#ffa6b0" stroke="none" stroke-width="1" />
<rect x="601.2" y="433.2" width="9.4" height="2.6" rx="1.3" fill="#e0752d" stroke="none" stroke-width="1" />
</svg>
<div class="t" style="top:8.10px;height:20px;line-height:20px;font-size:8.6px;color:#ccccdc;font-weight:normal;left:17.50px;-webkit-text-stroke:0.15px #ccccdc;">Datasource</div>
<div class="t" style="top:7.50px;height:20px;line-height:20px;font-size:10.0px;color:#ccccdc;font-weight:normal;left:71.50px;">default</div>
<div class="t" style="top:8.10px;height:20px;line-height:20px;font-size:8.6px;color:#ccccdc;font-weight:normal;left:136.80px;-webkit-text-stroke:0.15px #ccccdc;">Job</div>
<div class="t" style="top:7.50px;height:20px;line-height:20px;font-size:10.0px;color:#ccccdc;font-weight:normal;left:161.50px;">node</div>
<div class="t" style="top:8.10px;height:20px;line-height:20px;font-size:8.6px;color:#ccccdc;font-weight:normal;left:217.50px;-webkit-text-stroke:0.15px #ccccdc;">Host</div>
<div class="t" style="top:7.50px;height:20px;line-height:20px;font-size:9.75px;color:#ccccdc;font-weight:normal;left:246.00px;">lattepanda:9100</div>
<div class="t" style="top:8.10px;height:20px;line-height:20px;font-size:8.45px;color:#ccccdc;font-weight:normal;left:365.50px;-webkit-text-stroke:0.15px #ccccdc;">GitHub</div>
<div class="t" style="top:8.10px;height:20px;line-height:20px;font-size:8.45px;color:#ccccdc;font-weight:normal;left:424.50px;-webkit-text-stroke:0.15px #ccccdc;">Grafana</div>
<div class="t" style="top:7.60px;height:20px;line-height:20px;font-size:9.6px;color:#ccccdc;font-weight:normal;letter-spacing:0.37px;left:604.30px;-webkit-text-stroke:0.2px #ccccdc;">2026-04-03 09:19:02 to 2026-04-03 09:21:14</div>
<div class="t" style="top:7.50px;height:20px;line-height:20px;font-size:9.9px;color:#ccccdc;font-weight:normal;left:911.20px;">Refresh</div>
<div class="t" style="top:8.10px;height:20px;line-height:20px;font-size:8.9px;color:#ccccdc;font-weight:normal;left:957.50px;">10s</div>
<div class="t" style="top:34.30px;height:20px;line-height:20px;font-size:9.75px;color:#ccccdc;font-weight:normal;left:18.80px;">CPU Basic</div>
<div class="t" style="top:148.80px;height:20px;line-height:20px;font-size:8.7px;color:rgba(204,204,220,0.88);font-weight:normal;right:960.40px;text-align:right;transform:scaleX(0.95);transform-origin:right center;">0%</div>
<div class="t" style="top:130.38px;height:20px;line-height:20px;font-size:8.7px;color:rgba(204,204,220,0.88);font-weight:normal;right:960.40px;text-align:right;transform:scaleX(0.95);transform-origin:right center;">20%</div>
<div class="t" style="top:111.96px;height:20px;line-height:20px;font-size:8.7px;color:rgba(204,204,220,0.88);font-weight:normal;right:960.40px;text-align:right;transform:scaleX(0.95);transform-origin:right center;">40%</div>
<div class="t" style="top:93.54px;height:20px;line-height:20px;font-size:8.7px;color:rgba(204,204,220,0.88);font-weight:normal;right:960.40px;text-align:right;transform:scaleX(0.95);transform-origin:right center;">60%</div>
<div class="t" style="top:75.12px;height:20px;line-height:20px;font-size:8.7px;color:rgba(204,204,220,0.88);font-weight:normal;right:960.40px;text-align:right;transform:scaleX(0.95);transform-origin:right center;">80%</div>
<div class="t" style="top:56.70px;height:20px;line-height:20px;font-size:8.7px;color:rgba(204,204,220,0.88);font-weight:normal;right:960.40px;text-align:right;transform:scaleX(0.95);transform-origin:right center;">100%</div>
<div class="t" style="top:157.60px;height:20px;line-height:20px;font-size:8.6px;color:rgba(204,204,220,0.88);font-weight:normal;left:-64.80px;width:300px;text-align:center;transform:scaleX(0.92);transform-origin:center center;">09:19:15</div>
<div class="t" style="top:157.60px;height:20px;line-height:20px;font-size:8.6px;color:rgba(204,204,220,0.88);font-weight:normal;left:-14.24px;width:300px;text-align:center;transform:scaleX(0.92);transform-origin:center center;">09:19:30</div>
<div class="t" style="top:157.60px;height:20px;line-height:20px;font-size:8.6px;color:rgba(204,204,220,0.88);font-weight:normal;left:36.32px;width:300px;text-align:center;transform:scaleX(0.92);transform-origin:center center;">09:19:45</div>
<div class="t" style="top:157.60px;height:20px;line-height:20px;font-size:8.6px;color:rgba(204,204,220,0.88);font-weight:normal;left:86.88px;width:300px;text-align:center;transform:scaleX(0.92);transform-origin:center center;">09:20:00</div>
<div class="t" style="top:157.60px;height:20px;line-height:20px;font-size:8.6px;color:rgba(204,204,220,0.88);font-weight:normal;left:137.44px;width:300px;text-align:center;transform:scaleX(0.92);transform-origin:center center;">09:20:15</div>
<div class="t" style="top:157.60px;height:20px;line-height:20px;font-size:8.6px;color:rgba(204,204,220,0.88);font-weight:normal;left:188.00px;width:300px;text-align:center;transform:scaleX(0.92);transform-origin:center center;">09:20:30</div>
<div class="t" style="top:157.60px;height:20px;line-height:20px;font-size:8.6px;color:rgba(204,204,220,0.88);font-weight:normal;left:238.56px;width:300px;text-align:center;transform:scaleX(0.92);transform-origin:center center;">09:20:45</div>
<div class="t" style="top:157.60px;height:20px;line-height:20px;font-size:8.6px;color:rgba(204,204,220,0.88);font-weight:normal;left:289.12px;width:300px;text-align:center;transform:scaleX(0.92);transform-origin:center center;">09:21:00</div>
<div class="t" style="top:175.30px;height:20px;line-height:20px;font-size:8.5px;color:#ccccdc;font-weight:normal;left:33.70px;">Busy System</div>
<div class="t" style="top:175.30px;height:20px;line-height:20px;font-size:8.5px;color:#ccccdc;font-weight:normal;left:103.60px;">Busy User</div>
<div class="t" style="top:175.30px;height:20px;line-height:20px;font-size:8.5px;color:#ccccdc;font-weight:normal;left:163.60px;">Busy Iowait</div>
<div class="t" style="top:175.30px;height:20px;line-height:20px;font-size:8.5px;color:#ccccdc;font-weight:normal;left:228.40px;">Busy IRQs</div>
<div class="t" style="top:175.30px;height:20px;line-height:20px;font-size:8.5px;color:#ccccdc;font-weight:normal;left:288.80px;">Busy Other</div>
<div class="t" style="top:175.30px;height:20px;line-height:20px;font-size:8.5px;color:#ccccdc;font-weight:normal;left:351.90px;">Idle</div>
<div class="t" style="top:34.30px;height:20px;line-height:20px;font-size:9.95px;color:#ccccdc;font-weight:normal;left:512.40px;">Memory Basic</div>
<div class="t" style="top:59.20px;height:20px;line-height:20px;font-size:8.6px;color:rgba(204,204,220,0.88);font-weight:normal;right:455.80px;text-align:right;transform:scaleX(0.93);transform-origin:right center;">2 GiB</div>
<div class="t" style="top:70.42px;height:20px;line-height:20px;font-size:8.6px;color:rgba(204,204,220,0.88);font-weight:normal;right:455.80px;text-align:right;transform:scaleX(0.93);transform-origin:right center;">1.75 GiB</div>
<div class="t" style="top:81.65px;height:20px;line-height:20px;font-size:8.6px;color:rgba(204,204,220,0.88);font-weight:normal;right:455.80px;text-align:right;transform:scaleX(0.93);transform-origin:right center;">1.50 GiB</div>
<div class="t" style="top:92.88px;height:20px;line-height:20px;font-size:8.6px;color:rgba(204,204,220,0.88);font-weight:normal;right:455.80px;text-align:right;transform:scaleX(0.93);transform-origin:right center;">1.25 GiB</div>
<div class="t" style="top:104.10px;height:20px;line-height:20px;font-size:8.6px;color:rgba(204,204,220,0.88);font-weight:normal;right:455.80px;text-align:right;transform:scaleX(0.93);transform-origin:right center;">1 GiB</div>
<div class="t" style="top:115.33px;height:20px;line-height:20px;font-size:8.6px;color:rgba(204,204,220,0.88);font-weight:normal;right:455.80px;text-align:right;transform:scaleX(0.93);transform-origin:right center;">768 MiB</div>
<div class="t" style="top:126.55px;height:20px;line-height:20px;font-size:8.6px;color:rgba(204,204,220,0.88);font-weight:normal;right:455.80px;text-align:right;transform:scaleX(0.93);transform-origin:right center;">512 MiB</div>
<div class="t" style="top:137.78px;height:20px;line-height:20px;font-size:8.6px;color:rgba(204,204,220,0.88);font-weight:normal;right:455.80px;text-align:right;transform:scaleX(0.93);transform-origin:right center;">256 MiB</div>
<div class="t" style="top:149.00px;height:20px;line-height:20px;font-size:8.6px;color:rgba(204,204,220,0.88);font-weight:normal;right:455.80px;text-align:right;transform:scaleX(0.93);transform-origin:right center;">0 B</div>
<div class="t" style="top:157.60px;height:20px;line-height:20px;font-size:8.6px;color:rgba(204,204,220,0.88);font-weight:normal;left:439.05px;width:300px;text-align:center;transform:scaleX(0.92);transform-origin:center center;">09:19:15</div>
<div class="t" style="top:157.60px;height:20px;line-height:20px;font-size:8.6px;color:rgba(204,204,220,0.88);font-weight:normal;left:488.45px;width:300px;text-align:center;transform:scaleX(0.92);transform-origin:center center;">09:19:30</div>
<div class="t" style="top:157.60px;height:20px;line-height:20px;font-size:8.6px;color:rgba(204,204,220,0.88);font-weight:normal;left:537.85px;width:300px;text-align:center;transform:scaleX(0.92);transform-origin:center center;">09:19:45</div>
<div class="t" style="top:157.60px;height:20px;line-height:20px;font-size:8.6px;color:rgba(204,204,220,0.88);font-weight:normal;left:587.25px;width:300px;text-align:center;transform:scaleX(0.92);transform-origin:center center;">09:20:00</div>
<div class="t" style="top:157.60px;height:20px;line-height:20px;font-size:8.6px;color:rgba(204,204,220,0.88);font-weight:normal;left:636.65px;width:300px;text-align:center;transform:scaleX(0.92);transform-origin:center center;">09:20:15</div>
<div class="t" style="top:157.60px;height:20px;line-height:20px;font-size:8.6px;color:rgba(204,204,220,0.88);font-weight:normal;left:686.05px;width:300px;text-align:center;transform:scaleX(0.92);transform-origin:center center;">09:20:30</div>
<div class="t" style="top:157.60px;height:20px;line-height:20px;font-size:8.6px;color:rgba(204,204,220,0.88);font-weight:normal;left:735.45px;width:300px;text-align:center;transform:scaleX(0.92);transform-origin:center center;">09:20:45</div>
<div class="t" style="top:157.60px;height:20px;line-height:20px;font-size:8.6px;color:rgba(204,204,220,0.88);font-weight:normal;left:784.85px;width:300px;text-align:center;transform:scaleX(0.92);transform-origin:center center;">09:21:00</div>
<div class="t" style="top:175.40px;height:20px;line-height:20px;font-size:8.5px;color:#ccccdc;font-weight:normal;left:526.60px;">RAM Total</div>
<div class="t" style="top:175.40px;height:20px;line-height:20px;font-size:8.5px;color:#ccccdc;font-weight:normal;left:586.50px;">RAM Used</div>
<div class="t" style="top:175.40px;height:20px;line-height:20px;font-size:8.5px;color:#ccccdc;font-weight:normal;left:647.30px;">RAM Cache + Buffer</div>
<div class="t" style="top:175.40px;height:20px;line-height:20px;font-size:8.5px;color:#ccccdc;font-weight:normal;left:746.90px;">RAM Free</div>
<div class="t" style="top:175.40px;height:20px;line-height:20px;font-size:8.5px;color:#ccccdc;font-weight:normal;left:804.60px;">SWAP Used</div>
<div class="t" style="top:209.70px;height:20px;line-height:20px;font-size:10.05px;color:#ccccdc;font-weight:normal;left:19.40px;">Hardware temperature monitor</div>
<div class="t" style="top:269.90px;height:20px;line-height:20px;font-size:8.7px;color:rgba(204,204,220,0.88);font-weight:normal;right:940.80px;text-align:right;">40 °C</div>
<div class="t" style="top:309.00px;height:20px;line-height:20px;font-size:8.7px;color:rgba(204,204,220,0.88);font-weight:normal;right:940.80px;text-align:right;">20 °C</div>
<div class="t" style="top:348.10px;height:20px;line-height:20px;font-size:8.7px;color:rgba(204,204,220,0.88);font-weight:normal;right:940.80px;text-align:right;">0 °C</div>
<div class="t" style="left:-19.6px;top:290.7px;width:80px;height:20px;line-height:20px;text-align:center;font-size:8.55px;color:rgba(204,204,220,0.88);transform:rotate(-90deg);">temperature</div>
<div class="t" style="top:356.90px;height:20px;line-height:20px;font-size:8.6px;color:rgba(204,204,220,0.88);font-weight:normal;left:-47.80px;width:300px;text-align:center;transform:scaleX(0.92);transform-origin:center center;">09:19:15</div>
<div class="t" style="top:356.90px;height:20px;line-height:20px;font-size:8.6px;color:rgba(204,204,220,0.88);font-weight:normal;left:0.64px;width:300px;text-align:center;transform:scaleX(0.92);transform-origin:center center;">09:19:30</div>
<div class="t" style="top:356.90px;height:20px;line-height:20px;font-size:8.6px;color:rgba(204,204,220,0.88);font-weight:normal;left:49.08px;width:300px;text-align:center;transform:scaleX(0.92);transform-origin:center center;">09:19:45</div>
<div class="t" style="top:356.90px;height:20px;line-height:20px;font-size:8.6px;color:rgba(204,204,220,0.88);font-weight:normal;left:97.52px;width:300px;text-align:center;transform:scaleX(0.92);transform-origin:center center;">09:20:00</div>
<div class="t" style="top:356.90px;height:20px;line-height:20px;font-size:8.6px;color:rgba(204,204,220,0.88);font-weight:normal;left:145.96px;width:300px;text-align:center;transform:scaleX(0.92);transform-origin:center center;">09:20:15</div>
<div class="t" style="top:356.90px;height:20px;line-height:20px;font-size:8.6px;color:rgba(204,204,220,0.88);font-weight:normal;left:194.40px;width:300px;text-align:center;transform:scaleX(0.92);transform-origin:center center;">09:20:30</div>
<div class="t" style="top:356.90px;height:20px;line-height:20px;font-size:8.6px;color:rgba(204,204,220,0.88);font-weight:normal;left:242.84px;width:300px;text-align:center;transform:scaleX(0.92);transform-origin:center center;">09:20:45</div>
<div class="t" style="top:356.90px;height:20px;line-height:20px;font-size:8.6px;color:rgba(204,204,220,0.88);font-weight:normal;left:291.28px;width:300px;text-align:center;transform:scaleX(0.92);transform-origin:center center;">09:21:00</div>
<div class="t" style="top:368.80px;height:20px;line-height:20px;font-size:8.4px;color:#6e9fff;font-weight:normal;left:36.40px;">Name</div>
<div class="t" style="top:368.80px;height:20px;line-height:20px;font-size:8.4px;color:#6e9fff;font-weight:normal;right:645.70px;text-align:right;">Mean</div>
<div class="t" style="top:368.80px;height:20px;line-height:20px;font-size:8.4px;color:#6e9fff;font-weight:normal;right:598.20px;text-align:right;">Last *</div>
<div class="t" style="top:368.80px;height:20px;line-height:20px;font-size:8.4px;color:#6e9fff;font-weight:normal;right:556.40px;text-align:right;">Max</div>
<div class="t" style="top:368.80px;height:20px;line-height:20px;font-size:8.4px;color:#6e9fff;font-weight:normal;right:517.10px;text-align:right;">Min</div>
<div class="t" style="top:384.10px;height:20px;line-height:20px;font-size:8.6px;color:#ccccdc;font-weight:normal;left:36.40px;">coretemp temp2 temp</div>
<div class="t" style="top:384.10px;height:20px;line-height:20px;font-size:8.6px;color:#ccccdc;font-weight:normal;right:645.70px;text-align:right;">46.7 °C</div>
<div class="t" style="top:384.10px;height:20px;line-height:20px;font-size:8.6px;color:#ccccdc;font-weight:normal;right:598.20px;text-align:right;">53 °C</div>
<div class="t" style="top:384.10px;height:20px;line-height:20px;font-size:8.6px;color:#ccccdc;font-weight:normal;right:556.40px;text-align:right;">53 °C</div>
<div class="t" style="top:384.10px;height:20px;line-height:20px;font-size:8.6px;color:#ccccdc;font-weight:normal;right:517.10px;text-align:right;">36 °C</div>
<div class="t" style="top:399.70px;height:20px;line-height:20px;font-size:8.6px;color:#ccccdc;font-weight:normal;left:36.40px;">coretemp temp3 temp</div>
<div class="t" style="top:399.70px;height:20px;line-height:20px;font-size:8.6px;color:#ccccdc;font-weight:normal;right:645.70px;text-align:right;">45.9 °C</div>
<div class="t" style="top:399.70px;height:20px;line-height:20px;font-size:8.6px;color:#ccccdc;font-weight:normal;right:598.20px;text-align:right;">51 °C</div>
<div class="t" style="top:399.70px;height:20px;line-height:20px;font-size:8.6px;color:#ccccdc;font-weight:normal;right:556.40px;text-align:right;">53 °C</div>
<div class="t" style="top:399.70px;height:20px;line-height:20px;font-size:8.6px;color:#ccccdc;font-weight:normal;right:517.10px;text-align:right;">36 °C</div>
<div class="t" style="top:415.30px;height:20px;line-height:20px;font-size:8.6px;color:#ccccdc;font-weight:normal;left:36.40px;">coretemp temp4 temp</div>
<div class="t" style="top:415.30px;height:20px;line-height:20px;font-size:8.6px;color:#ccccdc;font-weight:normal;right:645.70px;text-align:right;">43.4 °C</div>
<div class="t" style="top:415.30px;height:20px;line-height:20px;font-size:8.6px;color:#ccccdc;font-weight:normal;right:598.20px;text-align:right;">49 °C</div>
<div class="t" style="top:415.30px;height:20px;line-height:20px;font-size:8.6px;color:#ccccdc;font-weight:normal;right:556.40px;text-align:right;">49 °C</div>
<div class="t" style="top:415.30px;height:20px;line-height:20px;font-size:8.6px;color:#ccccdc;font-weight:normal;right:517.10px;text-align:right;">34 °C</div>
<div class="t" style="top:430.90px;height:20px;line-height:20px;font-size:8.6px;color:#ccccdc;font-weight:normal;left:36.40px;">coretemp temp5 temp</div>
<div class="t" style="top:430.90px;height:20px;line-height:20px;font-size:8.6px;color:#ccccdc;font-weight:normal;right:645.70px;text-align:right;">44.8 °C</div>
<div class="t" style="top:430.90px;height:20px;line-height:20px;font-size:8.6px;color:#ccccdc;font-weight:normal;right:598.20px;text-align:right;">51 °C</div>
<div class="t" style="top:430.90px;height:20px;line-height:20px;font-size:8.6px;color:#ccccdc;font-weight:normal;right:556.40px;text-align:right;">51 °C</div>
<div class="t" style="top:430.90px;height:20px;line-height:20px;font-size:8.6px;color:#ccccdc;font-weight:normal;right:517.10px;text-align:right;">34 °C</div>
<div class="t" style="top:209.80px;height:20px;line-height:20px;font-size:10.2px;color:#ccccdc;font-weight:normal;left:512.60px;">Network Traffic Basic</div>
<div class="t" style="top:251.40px;height:20px;line-height:20px;font-size:8.8px;color:rgba(204,204,220,0.88);font-weight:normal;right:446.80px;text-align:right;">400 Mb/s</div>
<div class="t" style="top:276.30px;height:20px;line-height:20px;font-size:8.8px;color:rgba(204,204,220,0.88);font-weight:normal;right:446.80px;text-align:right;">200 Mb/s</div>
<div class="t" style="top:301.40px;height:20px;line-height:20px;font-size:8.8px;color:rgba(204,204,220,0.88);font-weight:normal;right:446.80px;text-align:right;">0 b/s</div>
<div class="t" style="top:326.10px;height:20px;line-height:20px;font-size:8.8px;color:rgba(204,204,220,0.88);font-weight:normal;right:446.80px;text-align:right;">-200 Mb/s</div>
<div class="t" style="top:351.00px;height:20px;line-height:20px;font-size:8.8px;color:rgba(204,204,220,0.88);font-weight:normal;right:446.80px;text-align:right;">-400 Mb/s</div>
<div class="t" style="top:377.50px;height:20px;line-height:20px;font-size:8.6px;color:rgba(204,204,220,0.88);font-weight:normal;left:446.30px;width:300px;text-align:center;transform:scaleX(0.92);transform-origin:center center;">09:19:15</div>
<div class="t" style="top:377.50px;height:20px;line-height:20px;font-size:8.6px;color:rgba(204,204,220,0.88);font-weight:normal;left:494.68px;width:300px;text-align:center;transform:scaleX(0.92);transform-origin:center center;">09:19:30</div>
<div class="t" style="top:377.50px;height:20px;line-height:20px;font-size:8.6px;color:rgba(204,204,220,0.88);font-weight:normal;left:543.06px;width:300px;text-align:center;transform:scaleX(0.92);transform-origin:center center;">09:19:45</div>
<div class="t" style="top:377.50px;height:20px;line-height:20px;font-size:8.6px;color:rgba(204,204,220,0.88);font-weight:normal;left:591.44px;width:300px;text-align:center;transform:scaleX(0.92);transform-origin:center center;">09:20:00</div>
<div class="t" style="top:377.50px;height:20px;line-height:20px;font-size:8.6px;color:rgba(204,204,220,0.88);font-weight:normal;left:639.82px;width:300px;text-align:center;transform:scaleX(0.92);transform-origin:center center;">09:20:15</div>
<div class="t" style="top:377.50px;height:20px;line-height:20px;font-size:8.6px;color:rgba(204,204,220,0.88);font-weight:normal;left:688.20px;width:300px;text-align:center;transform:scaleX(0.92);transform-origin:center center;">09:20:30</div>
<div class="t" style="top:377.50px;height:20px;line-height:20px;font-size:8.6px;color:rgba(204,204,220,0.88);font-weight:normal;left:736.58px;width:300px;text-align:center;transform:scaleX(0.92);transform-origin:center center;">09:20:45</div>
<div class="t" style="top:377.50px;height:20px;line-height:20px;font-size:8.6px;color:rgba(204,204,220,0.88);font-weight:normal;left:784.96px;width:300px;text-align:center;transform:scaleX(0.92);transform-origin:center center;">09:21:00</div>
<div class="t" style="top:394.30px;height:20px;line-height:20px;font-size:8.5px;color:#ccccdc;font-weight:normal;left:526.60px;">recv enp0s20u1</div>
<div class="t" style="top:394.30px;height:20px;line-height:20px;font-size:8.5px;color:#ccccdc;font-weight:normal;left:608.70px;">recv enp1s0</div>
<div class="t" style="top:394.30px;height:20px;line-height:20px;font-size:8.5px;color:#ccccdc;font-weight:normal;left:675.00px;">recv fleet</div>
<div class="t" style="top:394.30px;height:20px;line-height:20px;font-size:8.5px;color:#ccccdc;font-weight:normal;left:732.50px;">recv jptr</div>
<div class="t" style="top:394.30px;height:20px;line-height:20px;font-size:8.5px;color:#ccccdc;font-weight:normal;left:784.50px;">recv lo</div>
<div class="t" style="top:394.30px;height:20px;line-height:20px;font-size:8.5px;color:#ccccdc;font-weight:normal;left:831.20px;">recv podman1</div>
<div class="t" style="top:394.30px;height:20px;line-height:20px;font-size:8.5px;color:#ccccdc;font-weight:normal;left:905.50px;">recv project2038</div>
<div class="t" style="top:409.60px;height:20px;line-height:20px;font-size:8.5px;color:#ccccdc;font-weight:normal;left:526.70px;">recv wlan0</div>
<div class="t" style="top:409.60px;height:20px;line-height:20px;font-size:8.5px;color:#ccccdc;font-weight:normal;left:589.50px;">trans enp0s20u1</div>
<div class="t" style="top:409.60px;height:20px;line-height:20px;font-size:8.5px;color:#ccccdc;font-weight:normal;left:673.70px;">trans enp1s0</div>
<div class="t" style="top:409.60px;height:20px;line-height:20px;font-size:8.5px;color:#ccccdc;font-weight:normal;left:743.00px;">trans fleet</div>
<div class="t" style="top:409.60px;height:20px;line-height:20px;font-size:8.5px;color:#ccccdc;font-weight:normal;left:802.50px;">trans jptr</div>
<div class="t" style="top:409.60px;height:20px;line-height:20px;font-size:8.5px;color:#ccccdc;font-weight:normal;left:858.00px;">trans lo</div>
<div class="t" style="top:409.60px;height:20px;line-height:20px;font-size:8.5px;color:#ccccdc;font-weight:normal;left:907.50px;">trans podman1</div>
<div class="t" style="top:425.10px;height:20px;line-height:20px;font-size:8.5px;color:#ccccdc;font-weight:normal;left:526.50px;">trans project2038</div>
<div class="t" style="top:425.10px;height:20px;line-height:20px;font-size:8.5px;color:#ccccdc;font-weight:normal;left:615.70px;">trans wlan0</div>
</body></html>
